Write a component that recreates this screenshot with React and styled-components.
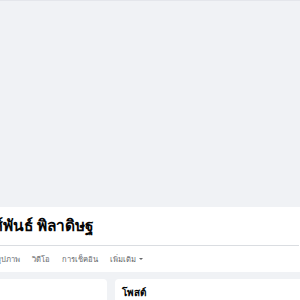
import React from "react";
import styled, { createGlobalStyle } from "styled-components";

const Global = createGlobalStyle`
  html, body { margin: 0; padding: 0; background: #f0f2f5; overflow: hidden; }
  body { font-family: "Noto Sans", "Liberation Sans", sans-serif; }
`;

const Page = styled.div`
  width: 300px;
  height: 300px;
  overflow: hidden;
  display: flex;
  flex-direction: column;
  background: #f0f2f5;
  & > * { flex-shrink: 0; }
`;

const TopEdge = styled.div`
  height: 1px;
  background: #e4e6eb;
`;

const Cover = styled.div`
  height: 206px;
  background: #f0f2f5;
`;

const Header = styled.div`
  background: #ffffff;
  display: flex;
  flex-direction: column;
`;

const NameRow = styled.div`
  height: 38px;
  display: flex;
  align-items: center;
`;

const Name = styled.h1`
  margin: 0 0 0 -24px;
  font-size: 15.5px;
  font-weight: 700;
  color: #050505;
  white-space: nowrap;
  line-height: 1;
`;

const Divider = styled.div`
  height: 1px;
  background: #dadde1;
  margin-right: 1px;
`;

const Tabs = styled.nav`
  height: 26px;
  display: flex;
  align-items: center;
  gap: 12px;
  margin-left: -3px;
`;

const Tab = styled.span`
  font-size: 7.6px;
  color: #65676b;
  white-space: nowrap;
  display: flex;
  align-items: center;
  gap: 3px;
`;

const Caret = styled.span`
  width: 0;
  height: 0;
  border-left: 2px solid transparent;
  border-right: 2px solid transparent;
  border-top: 2.5px solid #65676b;
`;

const Content = styled.div`
  flex: 1;
  display: grid;
  grid-template-columns: 140px 200px;
  gap: 8px;
  padding-top: 7px;
  margin-left: -33px;
`;

const Card = styled.section`
  background: #ffffff;
  border-radius: 4px;
  padding: 7px 7px;
`;

const CardTitle = styled.h2`
  margin: 0;
  font-size: 10px;
  font-weight: 700;
  color: #050505;
  line-height: 1.2;
`;

export default function App() {
  return (
    <Page>
      <Global />
      <TopEdge />
      <Cover />
      <Header>
        <NameRow>
          <Name>วงศ์พันธ์ พิลาดิษฐ</Name>
        </NameRow>
        <Divider />
        <Tabs>
          <Tab>รูปภาพ</Tab>
          <Tab>วิดีโอ</Tab>
          <Tab>การเช็คอิน</Tab>
          <Tab>
            เพิ่มเติม
            <Caret />
          </Tab>
        </Tabs>
      </Header>
      <Content>
        <Card />
        <Card>
          <CardTitle>โพสต์</CardTitle>
        </Card>
      </Content>
    </Page>
  );
}
